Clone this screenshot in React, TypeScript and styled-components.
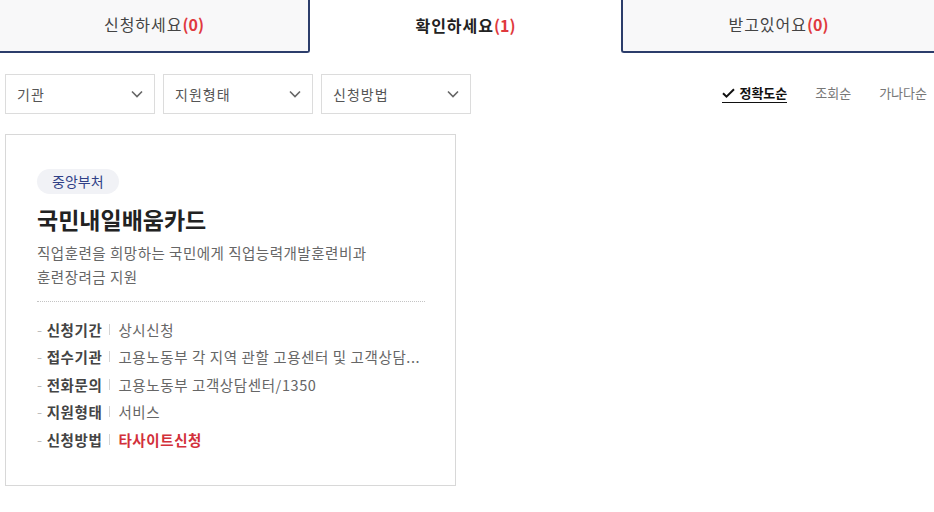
import React from "react";
import styled, { createGlobalStyle } from "styled-components";

const Global = createGlobalStyle`
  html, body { margin: 0; padding: 0; background: #fff; }
  body { font-family: "Noto Sans CJK KR", "Noto Sans", sans-serif; color: #333; }
  * { box-sizing: border-box; }
`;

const Page = styled.div`
  width: 934px;
`;

const Tabs = styled.div`
  display: grid;
  grid-template-columns: 310px 311px 313px;
  height: 53px;
`;

const Tab = styled.div<{ $active?: boolean; $pos: "left" | "mid" | "right" }>`
  display: flex;
  align-items: center;
  justify-content: center;
  font-size: 16px;
  letter-spacing: 1px;
  color: ${(p) => (p.$active ? "#222" : "#444")};
  font-weight: ${(p) => (p.$active ? 700 : 400)};
  background: ${(p) => (p.$active ? "#fff" : "#f8f8f9")};
  border-bottom: ${(p) => (p.$active ? "none" : "2px solid #2c3d6b")};
  border-right: ${(p) => (p.$pos === "left" ? "2px solid #2c3d6b" : "none")};
  border-left: ${(p) => (p.$pos === "right" ? "2px solid #2c3d6b" : "none")};
  border-radius: ${(p) =>
    p.$pos === "left" ? "0 0 3px 0" : p.$pos === "right" ? "0 0 0 3px" : "0"};
  padding-bottom: 3px;
`;

const Count = styled.span`
  color: #e0393e;
  font-weight: 700;
  letter-spacing: 0;
`;

const FilterRow = styled.div`
  display: flex;
  align-items: center;
  justify-content: space-between;
  padding: 21px 7px 0 5px;
`;

const Selects = styled.div`
  display: flex;
  gap: 8px;
`;

const Select = styled.div`
  width: 150px;
  height: 40px;
  border: 1px solid #dcdcdc;
  display: flex;
  align-items: center;
  justify-content: space-between;
  padding: 0 10px 0 11px;
  font-size: 14px;
  letter-spacing: 1px;
  color: #555;
  background: #fff;
`;

const Sorts = styled.div`
  display: flex;
  align-items: center;
  gap: 28px;
  padding-bottom: 2px;
`;

const SortItem = styled.span<{ $active?: boolean }>`
  display: inline-flex;
  align-items: center;
  gap: 4px;
  font-size: 13px;
  line-height: 19px;
  color: ${(p) => (p.$active ? "#111" : "#777")};
  font-weight: ${(p) => (p.$active ? 700 : 400)};
  border-bottom: ${(p) => (p.$active ? "1.5px solid #111" : "1.5px solid transparent")};
`;

const Card = styled.div`
  margin: 20px 0 0 5px;
  width: 451px;
  border: 1px solid #d8d8d8;
  padding: 33px 30px 32px 31px;
`;

const Tag = styled.span`
  display: inline-flex;
  align-items: center;
  height: 25px;
  padding: 0 15px;
  border-radius: 13px;
  background: #f1f2f6;
  color: #2f3f86;
  font-size: 14px;
`;

const Title = styled.h2`
  margin: 10px 0 0;
  font-size: 23px;
  line-height: 30px;
  font-weight: 700;
  color: #222;
`;

const Desc = styled.p`
  margin: 7px 0 0;
  font-size: 14.5px;
  letter-spacing: 0.5px;
  line-height: 24px;
  color: #666;
`;

const Divider = styled.hr`
  margin: 12px 0 0;
  border: none;
  border-top: 1px dotted #c4c4c4;
  height: 0;
`;

const List = styled.ul`
  margin: 14px 0 0;
  padding: 0;
  list-style: none;
`;

const Row = styled.li`
  display: flex;
  align-items: center;
  font-size: 14.5px;
  letter-spacing: 0.6px;
  line-height: 27.5px;
  white-space: nowrap;
  overflow: hidden;
`;

const Dash = styled.span`
  color: #bdbdbd;
  margin-right: 4px;
`;

const Label = styled.span`
  font-weight: 700;
  color: #444;
  flex: none;
`;

const Sep = styled.span`
  display: inline-block;
  width: 1px;
  height: 11px;
  background: #d4d4d4;
  margin: 0 8px 0 7px;
  flex: none;
`;

const Value = styled.span<{ $red?: boolean }>`
  color: ${(p) => (p.$red ? "#d2303a" : "#666")};
  font-weight: ${(p) => (p.$red ? 700 : 400)};
  overflow: hidden;
  text-overflow: ellipsis;
  min-width: 0;
`;

const Chevron = () => (
  <svg width="14" height="14" viewBox="0 0 14 14" fill="none">
    <path d="M2 4.5 L7 9.5 L12 4.5" stroke="#666" strokeWidth="1.6" />
  </svg>
);

const Check = () => (
  <svg width="13" height="12" viewBox="0 0 13 12" fill="none">
    <path d="M1 6.2 L4.5 9.7 L12 2.3" stroke="#111" strokeWidth="2" />
  </svg>
);

const rows: { label: string; value: string; red?: boolean }[] = [
  { label: "신청기간", value: "상시신청" },
  { label: "접수기관", value: "고용노동부 각 지역 관할 고용센터 및 고객상담..." },
  { label: "전화문의", value: "고용노동부 고객상담센터/1350" },
  { label: "지원형태", value: "서비스" },
  { label: "신청방법", value: "타사이트신청", red: true },
];

export default function App() {
  return (
    <Page>
      <Global />
      <Tabs>
        <Tab $pos="left">
          신청하세요<Count>(0)</Count>
        </Tab>
        <Tab $pos="mid" $active>
          확인하세요<Count>(1)</Count>
        </Tab>
        <Tab $pos="right">
          받고있어요<Count>(0)</Count>
        </Tab>
      </Tabs>
      <FilterRow>
        <Selects>
          <Select>
            기관
            <Chevron />
          </Select>
          <Select>
            지원형태
            <Chevron />
          </Select>
          <Select>
            신청방법
            <Chevron />
          </Select>
        </Selects>
        <Sorts>
          <SortItem $active>
            <Check />
            정확도순
          </SortItem>
          <SortItem>조회순</SortItem>
          <SortItem>가나다순</SortItem>
        </Sorts>
      </FilterRow>
      <Card>
        <Tag>중앙부처</Tag>
        <Title>국민내일배움카드</Title>
        <Desc>
          직업훈련을 희망하는 국민에게 직업능력개발훈련비과
          <br />
          훈련장려금 지원
        </Desc>
        <Divider />
        <List>
          {rows.map((r) => (
            <Row key={r.label}>
              <Dash>-</Dash>
              <Label>{r.label}</Label>
              <Sep />
              <Value $red={r.red}>{r.value}</Value>
            </Row>
          ))}
        </List>
      </Card>
    </Page>
  );
}
